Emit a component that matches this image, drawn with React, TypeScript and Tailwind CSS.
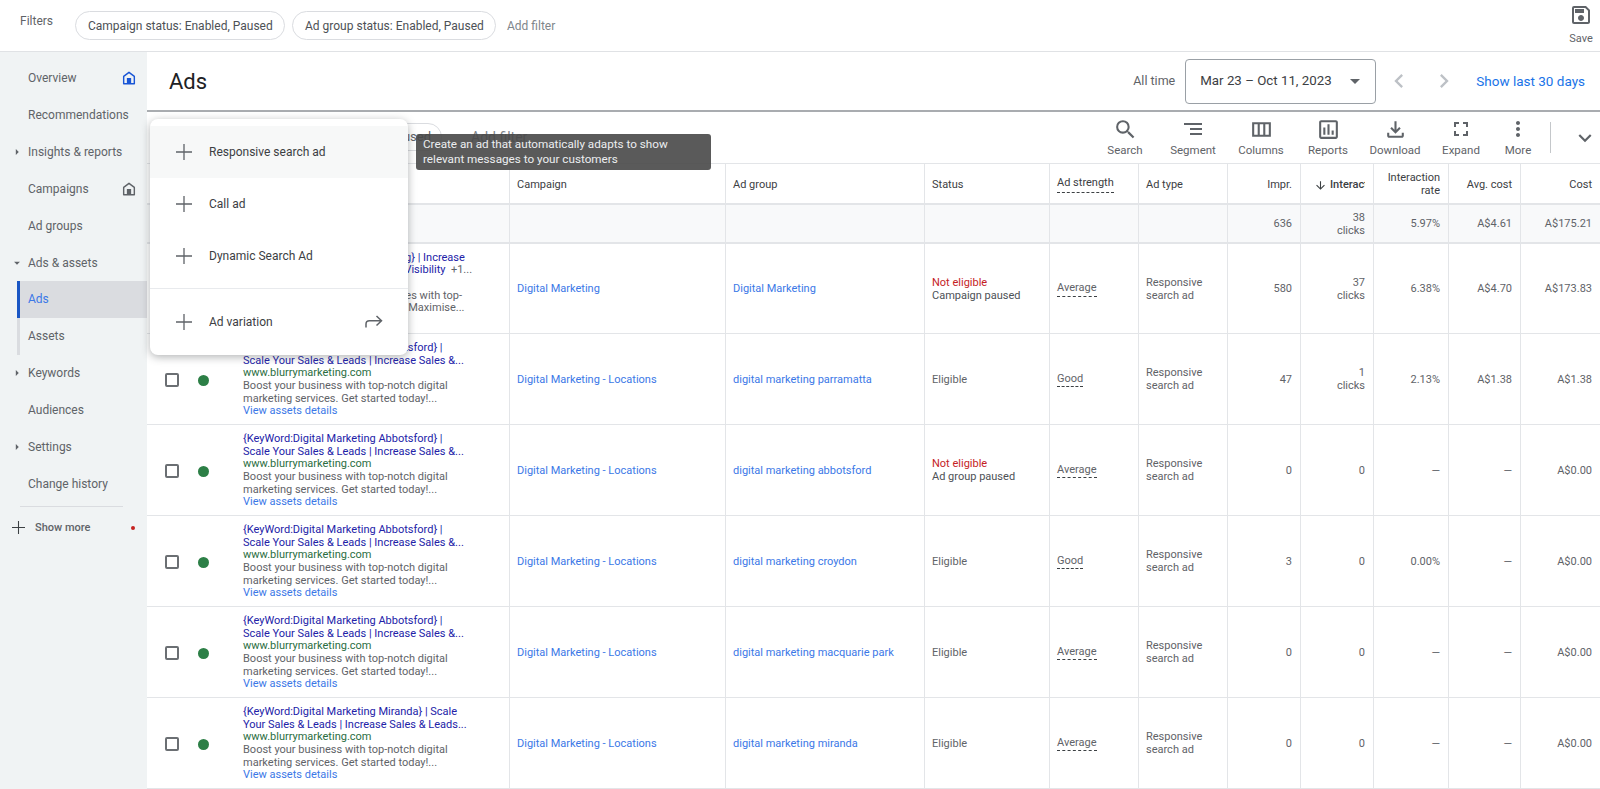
import React from "react";
import {
  MdSearch, MdSegment, MdOutlineViewColumn, MdOutlineAssessment, MdOutlineFileDownload,
  MdMoreVert, MdExpandMore, MdChevronLeft, MdChevronRight, MdArrowDropDown, MdArrowRight,
  MdArrowDownward, MdOutlineSave,
} from "react-icons/md";

const Home = ({ c }: { c: string }) => (
  <svg width="16" height="16" viewBox="0 0 18 18" fill="none" style={{ color: c }}>
    <path d="M3 7.2 9 2.6l6 4.6V15.5H3z" stroke="currentColor" strokeWidth="1.6" strokeLinejoin="round" />
    <rect x="6.6" y="9" width="4.8" height="6.5" fill="currentColor" />
  </svg>
);

const Expand = () => (
  <svg width="24" height="24" viewBox="0 0 24 24" fill="none" stroke="#5f6368" strokeWidth="2">
    <path d="M6 10V6h4M14 6h4v4M18 14v4h-4M10 18H6v-4" />
  </svg>
);

const ThinPlus = ({ s = 16, c = "#5f6368" }: { s?: number; c?: string }) => (
  <svg width={s} height={s} viewBox="0 0 16 16" fill="none" stroke={c} strokeWidth="1.3" className="shrink-0">
    <path d="M8 0v16M0 8h16" />
  </svg>
);

const nav: { label: string; arrow?: "right" | "down"; home?: string; active?: boolean; sub?: boolean }[] = [
  { label: "Overview", home: "#1a56d6" },
  { label: "Recommendations" },
  { label: "Insights & reports", arrow: "right" },
  { label: "Campaigns", home: "#5f6368" },
  { label: "Ad groups" },
  { label: "Ads & assets", arrow: "down" },
  { label: "Ads", active: true },
  { label: "Assets", sub: true },
  { label: "Keywords", arrow: "right" },
  { label: "Audiences" },
  { label: "Settings", arrow: "right" },
  { label: "Change history" },
];

const tools = [
  { label: "Search", icon: <MdSearch size={25} />, w: "w-[68px]" },
  { label: "Segment", icon: <MdSegment size={24} />, w: "w-[68px]" },
  { label: "Columns", icon: <MdOutlineViewColumn size={25} />, w: "w-[68px]" },
  { label: "Reports", icon: <MdOutlineAssessment size={25} />, w: "w-[66px]" },
  { label: "Download", icon: <MdOutlineFileDownload size={25} />, w: "w-[68px]" },
  { label: "Expand", icon: <Expand />, w: "w-[64px]" },
  { label: "More", icon: <MdMoreVert size={24} />, w: "w-[50px]" },
];

const cols = "grid grid-cols-[363px_216px_199px_125px_89px_89px_73px_73px_75px_72px_79px]";
const cell = "border-r border-b border-[#e3e5e8] flex items-center min-w-0 pt-[2px]";
const numCell = cell + " justify-end text-right pr-2 text-[#5f6368]";
const hdr = "border-r border-b-2 border-[#e3e5e8] flex items-center min-w-0 text-[#3c4043] pt-[3px]";

type Row = {
  t1: string; t2: string; url: string; d1: string; d2: string;
  campaign: string; group: string; status: string; sub?: string; red?: boolean; strength: string;
  impr: string; inter: string; clicks?: boolean; rate: string; avg: string; cost: string;
};

const boost = { url: "www.blurrymarketing.com", d1: "Boost your business with top-notch digital", d2: "marketing services. Get started today!..." };
const abb = { t1: "{KeyWord:Digital Marketing Abbotsford} |", t2: "Scale Your Sales & Leads | Increase Sales &..." };
const loc = "Digital Marketing - Locations";

const rows: Row[] = [
  { t1: "{KeyWord:Digital Marketing Listing} | Increase", t2: "Scale Your Online Marketing Site Visibility", url: "www.blurrymarketing.com", d1: "Grow our online presence and sales with top-", d2: "notch online digital ad marketing. Maximise...", campaign: "Digital Marketing", group: "Digital Marketing", status: "Not eligible", sub: "Campaign paused", red: true, strength: "Average", impr: "580", inter: "37", clicks: true, rate: "6.38%", avg: "A$4.70", cost: "A$173.83" },
  { ...abb, ...boost, campaign: loc, group: "digital marketing parramatta", status: "Eligible", strength: "Good", impr: "47", inter: "1", clicks: true, rate: "2.13%", avg: "A$1.38", cost: "A$1.38" },
  { ...abb, ...boost, campaign: loc, group: "digital marketing abbotsford", status: "Not eligible", sub: "Ad group paused", red: true, strength: "Average", impr: "0", inter: "0", rate: "—", avg: "—", cost: "A$0.00" },
  { ...abb, ...boost, campaign: loc, group: "digital marketing croydon", status: "Eligible", strength: "Good", impr: "3", inter: "0", rate: "0.00%", avg: "—", cost: "A$0.00" },
  { ...abb, ...boost, campaign: loc, group: "digital marketing macquarie park", status: "Eligible", strength: "Average", impr: "0", inter: "0", rate: "—", avg: "—", cost: "A$0.00" },
  { t1: "{KeyWord:Digital Marketing Miranda} | Scale", t2: "Your Sales & Leads | Increase Sales & Leads...", ...boost, campaign: loc, group: "digital marketing miranda", status: "Eligible", strength: "Average", impr: "0", inter: "0", rate: "—", avg: "—", cost: "A$0.00" },
];

const MenuItem = ({ label, active, last }: { label: string; active?: boolean; last?: boolean }) => (
  <div className={"flex items-center h-[52px] pl-[26px] pr-6 " + (active ? "bg-[#f7f8f8]" : "")}>
    <ThinPlus />
    <span className="ml-[17px] text-[12px] text-[#3c4043] flex-1">{label}</span>
    {last && (
      <svg width="20" height="16" viewBox="0 0 20 16" fill="none" stroke="#5f6368" strokeWidth="1.5">
        <path d="M2 13.5V10c0-2 1.5-3.2 3.5-3.2H17M12.5 2 17.5 6.8 12.5 11.5" />
      </svg>
    )}
  </div>
);

export default function App() {
  return (
    <div className="w-[1600px] h-[789px] overflow-hidden flex flex-col bg-white [font-family:Roboto,sans-serif]">
      <div className="h-[52px] shrink-0 flex items-start border-b border-[#e0e2e5] pl-5 pr-0">
        <span className="text-[12px] text-[#5f6368] mt-[12px] w-[55px]">Filters</span>
        <div className="flex items-center gap-[7px] mt-[11px]">
          <span className="h-[29px] flex items-center px-3 rounded-full border border-[#dadce0] text-[12px] text-[#4d5156] w-[210px] whitespace-nowrap">Campaign status: Enabled, Paused</span>
          <span className="h-[29px] flex items-center px-3 rounded-full border border-[#dadce0] text-[12px] text-[#4d5156] w-[204px] whitespace-nowrap">Ad group status: Enabled, Paused</span>
          <span className="ml-[4px] text-[12px] text-[#80868b]">Add filter</span>
        </div>
        <div className="ml-auto w-[38px] flex flex-col items-center pt-[3px] text-[#5f6368]">
          <MdOutlineSave size={24} />
          <span className="text-[11px] mt-[4px]">Save</span>
        </div>
      </div>

      <div className="flex-1 flex min-h-0">
        <aside className="w-[147px] shrink-0 bg-[#f0f3f4] pt-[8px]">
          {nav.map((n) => (
            <div key={n.label} className={"h-[36.83px] flex items-center ml-[17px] " + (n.active ? "border-l-[3px] border-[#1a56c4] bg-[#dadce0]" : n.sub ? "border-l-[3px] border-[#dadce0]" : "border-l-[3px] border-transparent")}>
              <span className="w-[8px] -ml-[7px] mr-[7px] flex justify-center text-[#5f6368]">
                {n.arrow === "right" && <MdArrowRight size={14} className="shrink-0" />}
                {n.arrow === "down" && <MdArrowDropDown size={14} className="shrink-0" />}
              </span>
              <span className={"text-[12px] " + (n.active ? "text-[#3b78e7]" : "text-[#5f6368]")}>{n.label}</span>
              {n.home && <span className="ml-auto mr-[10px]"><Home c={n.home} /></span>}
            </div>
          ))}
          <div className="ml-5 mt-[4px] w-[103px] border-t border-[#dadce0]" />
          <div className="flex items-center h-[42px] pl-[12px]">
            <ThinPlus s={13} c="#3c4043" />
            <span className="ml-[10px] text-[11px] font-medium text-[#5f6368]">Show more</span>
            <span className="ml-auto mr-[12px] w-[4px] h-[4px] rounded-full bg-[#c5221f]" />
          </div>
        </aside>

        <main className="flex-1 min-w-0 relative flex flex-col">
          <div className="h-[60px] shrink-0 flex items-center border-b-2 border-[#a9acb0] pl-[22px]">
            <h1 className="text-[22px] text-[#202124]">Ads</h1>
            <span className="ml-auto text-[12.5px] text-[#5f6368]">All time</span>
            <div className="ml-[10px] w-[191px] h-[45px] rounded border border-[#9aa0a6] flex items-center pl-[14px] pr-2">
              <span className="text-[13.3px] text-[#3c4043] flex-1 whitespace-nowrap">Mar 23 – Oct 11, 2023</span>
              <MdArrowDropDown size={24} className="text-[#5f6368]" />
            </div>
            <MdChevronLeft size={28} className="ml-[9px] text-[#bdc1c6]" />
            <MdChevronRight size={28} className="ml-[17px] text-[#bdc1c6]" />
            <span className="ml-[18px] mr-[15px] text-[13.5px] text-[#1a73e8] whitespace-nowrap">Show last 30 days</span>
          </div>

          <div className="h-[51px] shrink-0 flex items-start pl-[3px]">
            <div className="mt-[11px] ml-[95px] h-[28px] w-[197px] rounded-full border border-[#dadce0] flex items-center justify-end pr-[10px] text-[13px] text-[#5f6368] whitespace-nowrap">Ad status: Enabled, Paused</div>
            <span className="ml-[29px] mt-[15px] text-[14px] text-[#80868b]">Add filter</span>
            <div className="ml-auto flex items-start pt-[5px]">
              {tools.map((t) => (
                <div key={t.label} className={t.w + " flex flex-col items-center text-[#5f6368]"}>
                  <div className="h-[24px] flex items-center">{t.icon}</div>
                  <span className="text-[11.5px] mt-[1px] whitespace-nowrap">{t.label}</span>
                </div>
              ))}
              <div className="mt-[5px] ml-[7px] mr-[21px] h-[31px] border-l border-[#c4c7ca]" />
              <MdExpandMore size={26} className="mt-[8px] mr-[2px] text-[#5f6368]" />
            </div>
          </div>

          <div className="flex-1 min-h-0 text-[11px] leading-[12.6px] border-t border-[#e3e5e8]">
            <div className={cols + " h-[41px]"}>
              <div className={hdr} />
              <div className={hdr + " pl-[7px]"}>Campaign</div>
              <div className={hdr + " pl-[7px]"}>Ad group</div>
              <div className={hdr + " pl-[7px]"}>Status</div>
              <div className={hdr + " pl-[7px]"}><span className="border-b border-dashed border-[#3c4043] pb-[2px]">Ad strength</span></div>
              <div className={hdr + " pl-[7px]"}>Ad type</div>
              <div className={hdr + " justify-end pr-2"}>Impr.</div>
              <div className={hdr + " pl-[13px] pr-2"}>
                <div className="flex items-center overflow-hidden whitespace-nowrap font-medium">
                  <MdArrowDownward size={13} className="shrink-0 mr-[3px]" />
                  <span>Interactions</span>
                </div>
              </div>
              <div className={hdr + " justify-end text-right pr-2"}>Interaction<br />rate</div>
              <div className={hdr + " justify-end pr-2"}>Avg. cost</div>
              <div className={hdr + " justify-end pr-2 border-r-0"}>Cost</div>
            </div>

            <div className={cols + " h-[39px] bg-[#f8f9fa]"}>
              {[0, 1, 2, 3, 4, 5].map((i) => <div key={i} className={cell + " border-b-2"} />)}
              <div className={numCell + " border-b-2"}>636</div>
              <div className={numCell + " border-b-2"}>38<br />clicks</div>
              <div className={numCell + " border-b-2"}>5.97%</div>
              <div className={numCell + " border-b-2"}>A$4.61</div>
              <div className={numCell + " border-b-2 border-r-0"}>A$175.21</div>
            </div>

            {rows.map((r, i) => (
              <div key={i} className={cols + (i === 0 ? " h-[90px]" : " h-[91px]")}>
                <div className={cell + " pl-[18px]"}>
                  <span className="w-[14px] h-[14px] rounded-[2px] border-2 border-[#6b6f73] shrink-0" />
                  <span className="ml-[19px] w-[11px] h-[11px] rounded-full bg-[#2c7f46] shrink-0" />
                  <div className="ml-[34px] whitespace-nowrap">
                    <div className="text-[#2222a8]">{r.t1}</div>
                    <div className="text-[#2222a8]">{r.t2}{i === 0 && <span className="text-[#5f6368]">&nbsp; +1...</span>}</div>
                    <div className="text-[#2b6e3f]">{r.url}</div>
                    <div className="text-[#5f6368]">{r.d1}</div>
                    <div className="text-[#5f6368]">{r.d2}</div>
                    <div className="text-[#3b78e7]">View assets details</div>
                  </div>
                </div>
                <div className={cell + " pl-[7px] text-[#3b78e7]"}>{r.campaign}</div>
                <div className={cell + " pl-[7px] text-[#3b78e7]"}>{r.group}</div>
                <div className={cell + " pl-[7px]"}>
                  <div>
                    <div className={r.red ? "text-[#c5221f]" : "text-[#5f6368]"}>{r.status}</div>
                    {r.sub && <div className="text-[#4d5156]">{r.sub}</div>}
                  </div>
                </div>
                <div className={cell + " pl-[7px] text-[#5f6368]"}><span className="border-b border-dashed border-[#3c4043] pb-[1px]">{r.strength}</span></div>
                <div className={cell + " pl-[7px] text-[#5f6368]"}>Responsive<br />search ad</div>
                <div className={numCell}>{r.impr}</div>
                <div className={numCell}>{r.clicks ? <div>{r.inter}<br />clicks</div> : r.inter}</div>
                <div className={numCell}>{r.rate}</div>
                <div className={numCell}>{r.avg}</div>
                <div className={numCell + " border-r-0"}>{r.cost}</div>
              </div>
            ))}
          </div>

          <div className="absolute left-[3px] top-[67px] w-[258px] h-[236px] rounded-lg bg-white shadow-[0_2px_8px_rgba(60,64,67,0.4)] pt-[7px]">
            <MenuItem label="Responsive search ad" active />
            <MenuItem label="Call ad" />
            <MenuItem label="Dynamic Search Ad" />
            <div className="mt-[6px] border-t border-[#e8eaed]" />
            <div className="mt-[7px]"><MenuItem label="Ad variation" last /></div>
          </div>

          <div className="absolute left-[269px] top-[82px] w-[295px] h-[36px] rounded-[3px] bg-[#484848]/90 px-[7px] py-[3px] text-[11.7px] leading-[15px] text-[#eceef0] whitespace-nowrap">
            Create an ad that automatically adapts to show<br />relevant messages to your customers
          </div>
        </main>
      </div>
    </div>
  );
}
